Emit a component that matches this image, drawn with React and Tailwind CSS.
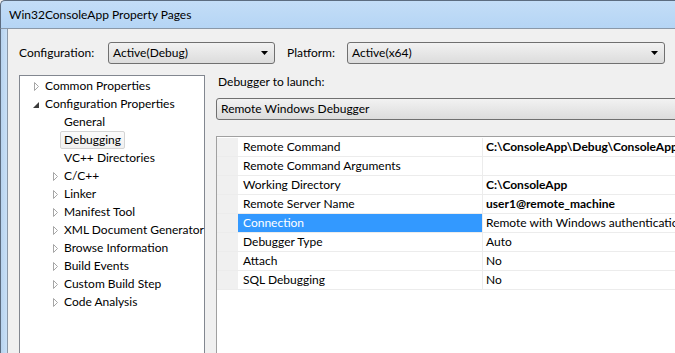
import { Fragment } from 'react'

const font = { fontFamily: 'Lato, "Noto Sans", sans-serif' }

function Collapsed() {
  return (
    <svg width="7" height="9" viewBox="0 0 7 9" className="shrink-0">
      <polygon points="1.5,0.5 5.5,4.5 1.5,8.5" fill="#fff" stroke="#a6a6a6" strokeWidth="1" />
    </svg>
  )
}

function Expanded() {
  return (
    <svg width="7" height="9" viewBox="0 0 7 9" className="shrink-0">
      <polygon points="6,2 6,8 0,8" fill="#3c3c3c" />
    </svg>
  )
}

function Combo({ text, w }) {
  return (
    <div className={`${w} h-[22px] flex items-center justify-between rounded-[3px] border border-[#707070] bg-gradient-to-b from-[#f2f2f2] to-[#dcdcdc] pl-[4px] pr-[6px] shrink-0`}>
      <span>{text}</span>
      <svg width="7" height="4" viewBox="0 0 7 4"><polygon points="0,0 7,0 3.5,4" fill="#000" /></svg>
    </div>
  )
}

const tree = [
  { t: 'Common Properties', lvl: 0, icon: 'c' },
  { t: 'Configuration Properties', lvl: 0, icon: 'e' },
  { t: 'General', lvl: 1 },
  { t: 'Debugging', lvl: 1, sel: true },
  { t: 'VC++ Directories', lvl: 1 },
  { t: 'C/C++', lvl: 1, icon: 'c' },
  { t: 'Linker', lvl: 1, icon: 'c' },
  { t: 'Manifest Tool', lvl: 1, icon: 'c' },
  { t: 'XML Document Generator', lvl: 1, icon: 'c' },
  { t: 'Browse Information', lvl: 1, icon: 'c' },
  { t: 'Build Events', lvl: 1, icon: 'c' },
  { t: 'Custom Build Step', lvl: 1, icon: 'c' },
  { t: 'Code Analysis', lvl: 1, icon: 'c' },
]

const props = [
  ['Remote Command', 'C:\\ConsoleApp\\Debug\\ConsoleApp.exe', true],
  ['Remote Command Arguments', '', false],
  ['Working Directory', 'C:\\ConsoleApp', true],
  ['Remote Server Name', 'user1@remote_machine', true],
  ['Connection', 'Remote with Windows authentication', false, true],
  ['Debugger Type', 'Auto', false],
  ['Attach', 'No', false],
  ['SQL Debugging', 'No', false],
]

export default function App() {
  return (
    <div className="w-[675px] h-[353px] overflow-hidden flex flex-col text-[12px] text-black bg-[#f0f0f0]" style={font}>
      <div className="h-[29px] shrink-0 flex items-center pl-[8px] bg-gradient-to-b from-[#c3ddf7] to-[#b5d5f5] border-t border-l border-[#5c6c80] rounded-tl-[5px] border-b border-b-[#8a98a8]">
        <span className="text-[12px]">Win32ConsoleApp Property Pages</span>
      </div>
      <div className="flex flex-1 min-h-0">
        <div className="w-[8px] shrink-0 bg-gradient-to-r from-[#b7d3ef] to-[#c9e0f7] border-l border-[#5c6c80] border-r border-r-[#8a98a8]" />
        <div className="flex-1 flex flex-col pl-[11px] pt-[13px] min-w-0">
          <div className="flex items-center h-[22px]">
            <span className="w-[89px] shrink-0">Configuration:</span>
            <Combo text="Active(Debug)" w="w-[167px]" />
            <span className="ml-[12px] w-[60px] shrink-0">Platform:</span>
            <Combo text="Active(x64)" w="w-[318px]" />
          </div>
          <div className="flex mt-[11px] flex-1 min-h-0">
            <div className="w-[186px] shrink-0 bg-white border border-[#828790] border-b-0 pt-[1px]">
              {tree.map((it) => (
                <div key={it.t} className={`h-[18px] flex items-center ${it.lvl ? 'pl-[32px]' : 'pl-[13px]'}`}>
                  <div className="w-[12px] flex items-center">
                    {it.icon === 'c' && <Collapsed />}
                    {it.icon === 'e' && <Expanded />}
                  </div>
                  <span className={it.sel ? 'px-[3px] -ml-[4px] h-[18px] leading-[16px] border border-[#d4d4d4] rounded-[2px] bg-gradient-to-b from-[#fafafa] to-[#f0f0f0]' : ''}>{it.t}</span>
                </div>
              ))}
            </div>
            <div className="ml-[11px] flex-1 min-w-0 flex flex-col">
              <div className="h-[13px] mt-[0px] pl-[2px] leading-[13px]">Debugger to launch:</div>
              <div className="mt-[10px] w-[520px] h-[22px] flex items-center rounded-[3px] border border-[#707070] bg-gradient-to-b from-[#f2f2f2] to-[#dcdcdc] pl-[4px]">
                Remote Windows Debugger
              </div>
              <div className="mt-[16px] w-[520px] flex-1 bg-white border-t border-l border-[#a0a0a0] pt-px">
                {props.map(([k, v, bold, sel]) => (
                  <div key={k} className="h-[19px] flex border-b border-[#ececec]">
                    <div className="w-[21px] shrink-0 bg-[#f0f0f0]" />
                    <div className={`w-[244px] shrink-0 pl-[5px] flex items-center ${sel ? 'bg-[#3399ff] text-white' : ''}`}>{k}</div>
                    <div className={`flex-1 pl-[3px] flex items-center whitespace-nowrap border-l border-[#ececec] ${bold ? 'font-bold' : ''}`}>{v}</div>
                  </div>
                ))}
              </div>
            </div>
          </div>
        </div>
      </div>
    </div>
  )
}
